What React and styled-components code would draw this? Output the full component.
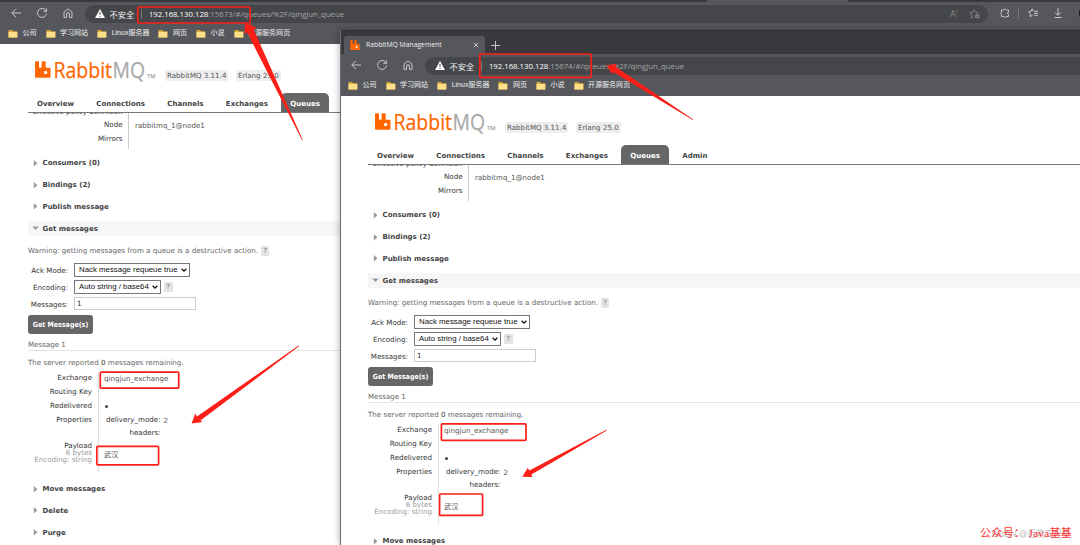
import React from 'react';
import styled, { createGlobalStyle } from 'styled-components';

const bookmarks = ['公司', '学习网站', 'Linux服务器', '网页', '小说', '开源服务网页'];
const tabs = ['Overview', 'Connections', 'Channels', 'Exchanges', 'Queues', 'Admin'];

const App = () => (
  <Desktop>
    <GlobalStyle />
    <BackWindow>
      <Browser port="15673" />
    </BackWindow>
    <FrontWindow>
      <Browser port="15674" />
    </FrontWindow>
    <Annotations />
    <CsdnMark>CSDN @巨萌工程师</CsdnMark>
    <AccountMark>公众号： Java基基</AccountMark>
  </Desktop>
)

export default App

const Browser = ({ port }) => (
  <BrowserFrame>
    <TabStrip>
      <BrowserTab>
        <RabbitIcon width="10" height="10" />
        <TabTitle>RabbitMQ Management</TabTitle>
        <Icon size="6" viewBox="0 0 6 6"><path d="M.8.8l4.4 4.4M5.2.8L.8 5.2" /></Icon>
      </BrowserTab>
      <Icon size="9" viewBox="0 0 9 9"><path d="M4.5 0v9M0 4.5h9" /></Icon>
    </TabStrip>
    <Toolbar>
      <NavIcons />
      <AddressBar>
        <svg width="10" height="9" viewBox="0 0 10 9">
          <path d="M5 0L10 9H0z" fill="#fff" />
          <path d="M5 3v3M5 7v1" stroke="#454649" />
        </svg>
        <Unsafe>不安全</Unsafe>
        <Divider />
        <Url><b>192.168.130.128</b>:{port}/#/queues/%2F/qingjun_queue</Url>
        <AddressActions>
          <ReadAloud>A<sup>))</sup></ReadAloud>
          <Icon size="11" viewBox="0 0 12 12">
            <path d="M5 10L2.6 11l.4-3L1 5.2l3-.5L5.6 2l1.6 2.7 3 .5" />
            <circle cx="9" cy="9" r="2.4" fill="#8b8c8f" stroke="none" />
            <path d="M9 7.8v2.4M7.8 9h2.4" stroke="#454649" strokeWidth=".7" />
          </Icon>
        </AddressActions>
      </AddressBar>
      <ToolbarActions>
        <Icon size="10" viewBox="0 0 10 10">
          <path d="M1.5 2h2a1.5 1.3 0 0 1 2.8 0h2.2v2.3a1 1 0 0 0 0 2v2.2H6.3a1.5 1.3 0 0 1-2.8 0h-2V6.4a1.2 1.2 0 0 1 0-2.2z" />
        </Icon>
        <Divider />
        <Icon size="10" viewBox="0 0 10 10">
          <path d="M5.3 3.2L4.1.9 3 3.4.6 3.8l1.8 1.9L2 8.5l2.6-1.3M6.2 3.3h3.6M6.2 5.3h3.6M6.2 7.3h3.6" />
        </Icon>
        <Icon size="10" viewBox="0 0 10 10"><path d="M5 0v7M2 4.3l3 3 3-3M1.5 9.5h7" /></Icon>
        <Avatar />
      </ToolbarActions>
    </Toolbar>
    <Bookmarks>
      {bookmarks.map(name => (
        <Bookmark key={name}>
          <svg width="10" height="9" viewBox="0 0 10 9">
            <path d="M.5 1h3.6l1 1.2h4.2v6.3H.5z" fill="#d9a93a" />
            <path d="M.5 3h8.8v5.5H.5z" fill="#ffe08a" />
          </svg>
          {name}
        </Bookmark>
      ))}
    </Bookmarks>
    <QueuePage />
  </BrowserFrame>
)

const NavIcons = () => (
  <Nav>
    <Icon size="10" viewBox="0 0 10 10"><path d="M10 5H.8M5 .8L.8 5 5 9.2" /></Icon>
    <Icon size="10" viewBox="0 0 10 10"><path d="M9.2 3.2A4.5 4.5 0 1 0 9.5 5.6M9.4.4v3H6.4" /></Icon>
    <Icon size="10" viewBox="0 0 10 10"><path d="M1 4.2L5 .8l4 3.4v5.2H6.4V6a1.4 1.4 0 0 0-2.8 0v3.4H1z" /></Icon>
  </Nav>
)

const RabbitIcon = (props) => (
  <svg viewBox="0 0 16 17" {...props}>
    <path d="M0 1Q0 0 1 0h2.2q1 0 1 1v5.3q0 .5.5.5h1.6q.5 0 .5-.5V1q0-1 1-1H10q1 0 1 1v5.3q0 .5.5.5H15q1 0 1 1V16q0 1-1 1H1q-1 0-1-1z" fill="#f60" />
    <rect x="9.4" y="10" width="3.2" height="3.2" rx=".8" fill="#fff" />
  </svg>
)

const QueuePage = () => (
  <Page>
    <Header>
      <RabbitIcon width="15.5" height="17" />
      <Wordmark viewBox="0 0 106 24">
        <text x="0.5" y="17.6" textLength="58.5" lengthAdjust="spacingAndGlyphs" fill="#f60" stroke="#f60">Rabbit</text>
        <text x="59.5" y="17.6" textLength="32.5" lengthAdjust="spacingAndGlyphs" fill="#aaa">MQ</text>
        <Trademark x="94" y="17.6" textLength="8.5" lengthAdjust="spacingAndGlyphs">TM</Trademark>
      </Wordmark>
      <Badge>RabbitMQ 3.11.4</Badge>
      <Badge>Erlang 25.0</Badge>
    </Header>
    <Menu>
      {tabs.map(tab => <MenuTab key={tab} selected={tab === 'Queues'}>{tab}</MenuTab>)}
    </Menu>
    <Scroll>
      <Facts>
        <Fact height={11}><Label>Effective policy definition</Label></Fact>
        <Fact height={14}><Label>Node</Label><Value>rabbitmq_1@node1</Value></Fact>
        <Fact height={14.5}><Label>Mirrors</Label></Fact>
        <Fact height={2.5}><Label /></Fact>
      </Facts>
      <Section title="Consumers (0)" />
      <Section title="Bindings (2)" />
      <Section title="Publish message" />
      <Section title="Get messages" open />
      <Warning>
        Warning: getting messages from a queue is a destructive action. <Help>?</Help>
      </Warning>
      <FormRow>
        <FormLabel>Ack Mode:</FormLabel>
        <Select width={116}>Nack message requeue true<Chevron /></Select>
      </FormRow>
      <FormRow>
        <FormLabel>Encoding:</FormLabel>
        <Select width={87}>Auto string / base64<Chevron /></Select>
        <Help>?</Help>
      </FormRow>
      <FormRow>
        <FormLabel>Messages:</FormLabel>
        <Input>1</Input>
      </FormRow>
      <Button>Get Message(s)</Button>
      <MessageTitle>Message 1</MessageTitle>
      <Remaining>The server reported <b>0</b> messages remaining.</Remaining>
      <Message />
      <Section title="Move messages" />
      <Section title="Delete" />
      <Section title="Purge" />
    </Scroll>
  </Page>
)

const Section = ({ title, open }) => (
  <SectionTitle open={open}>
    <svg width="7" height="7" viewBox="0 0 7 7">
      <path d={open ? 'M.2 1.5h6.6L3.5 5z' : 'M1.8 0v6.6L5.4 3.3z'} fill="#999" />
    </svg>
    {title}
  </SectionTitle>
)

const Chevron = () => (
  <Icon size="6" viewBox="0 0 6 6"><path d="M.6 1.8L3 4.2l2.4-2.4" stroke="#111" strokeWidth="1.3" /></Icon>
)

const Message = () => (
  <MessageTable>
    <MessageLabels>
      <Fact height={13}>Exchange</Fact>
      <Fact height={14.5}>Routing Key</Fact>
      <Fact height={13}>Redelivered</Fact>
      <Fact height={30}><Top>Properties</Top></Fact>
      <div>Payload<Sub>6 bytes</Sub><Sub>Encoding: string</Sub></div>
    </MessageLabels>
    <MessageValues>
      <Fact height={15}>qingjun_exchange</Fact>
      <Fact height={13} />
      <Fact height={13}><Dot /></Fact>
      <Fact height={15}><PropName>delivery_mode:</PropName><PropValue>2</PropValue></Fact>
      <Fact height={10.5}><PropName>headers:</PropName></Fact>
      <Payload>武汉</Payload>
    </MessageValues>
  </MessageTable>
)

// hand drawn style boxes and arrows lying over both windows
const Annotations = () => (
  <Overlay viewBox="0 0 1080 545">
    <g fill="none" stroke="#fb1f17" strokeWidth="1.7">
      <rect x="137.8" y="7" width="112.4" height="16" rx="1" />
      <rect x="479.8" y="54" width="111.4" height="23.3" rx="1" />
      <rect x="100.3" y="372.2" width="78.4" height="16" rx="1" />
      <rect x="96.8" y="446.4" width="61.8" height="18.4" rx="1" />
      <rect x="441.4" y="423.9" width="84.6" height="16.4" rx="1" />
      <rect x="439.6" y="494" width="43" height="21.4" rx="1" />
    </g>
    <g fill="#fb1f17">
      <path d="M245 22.5L256.5 27.7L253.8 29.8L302.8 140L302 140L247 32.2L244.4 34z" />
      <path d="M606.5 65.6L616.5 63.8L615.5 66.8L693.3 119.4L692.8 120L613.2 72L612.4 74.6z" />
      <path d="M191.6 423.5L195.2 413.8L197 416.4L298.5 345.6L299 346.3L200.4 420.5L202.5 422z" />
      <path d="M522.2 476.8L527.8 468L529.4 470.4L606.4 429.8L606.8 430.5L531.4 474.6L532.4 477z" />
    </g>
  </Overlay>
)

const GlobalStyle = createGlobalStyle`
  body {
    margin: 0;
    overflow: hidden;
  }
  * {
    box-sizing: border-box;
  }
`
const Desktop = styled.div`
  position: relative;
  width: 1080px;
  height: 545px;
  overflow: hidden;
  background: #fff;
  font: 7.1px/10px "DejaVu Sans", sans-serif;
  color: #555;
`
const BackWindow = styled.div`
  position: absolute;
  left: 0;
  top: -22px;
  width: 1080px;
  height: 567px;

  /* tab of this window sits further right */
  & > div > div:first-child {
    padding-left: 707px;
  }
`
const FrontWindow = styled.div`
  position: absolute;
  left: 340px;
  top: 30px;
  width: 1080px;
  height: 515px;
  overflow: hidden;
  box-shadow: 0 0 7px rgba(0, 0, 0, 0.35);
  border-left: 1px solid #6c6d70;
  & > div {
    margin-left: -1px;
  }
`
const BrowserFrame = styled.div`
  display: flex;
  flex-direction: column;
  height: 100%;
`
const TabStrip = styled.div`
  display: flex;
  align-items: center;
  flex: none;
  height: 24px;
  padding: 5px 0 0 4px;
  background: #38393c;
  border-top: 1px solid #303134;
`
const BrowserTab = styled.div`
  display: flex;
  align-items: center;
  width: 141px;
  height: 19px;
  padding: 0 6px;
  margin-right: 6px;
  border-radius: 3px 3px 0 0;
  background: #56575c;
  color: #eee;
`
const TabTitle = styled.span`
  flex: 1;
  margin-left: 6px;
  font: 6.8px/10px "Open Sans", sans-serif;
`
const Icon = styled.svg.attrs(props => ({ width: props.size, height: props.size }))`
  flex: none;
  fill: none;
  stroke: #d2d2d4;
  stroke-width: 0.9;
`
const Toolbar = styled.div`
  display: flex;
  align-items: center;
  flex: none;
  height: 22px;
  padding: 0 0 0 11px;
  background: #56575c;
`
const Nav = styled.div`
  display: flex;
  flex: none;
  gap: 16px;
  width: 74px;
`
const AddressBar = styled.div`
  display: flex;
  align-items: center;
  flex: none;
  width: 903px;
  height: 18px;
  margin-top: 1px;
  padding: 0 8px 0 10px;
  border-radius: 9px;
  background: #454649;
  svg {
    flex: none;
  }
`
const Unsafe = styled.span`
  margin: 0 6.5px 0 4.5px;
  color: #f2f2f2;
  font: 8.2px/12px "Noto Sans CJK SC", sans-serif;
`
const Divider = styled.span`
  width: 1px;
  height: 10px;
  background: #77787b;
`
const Url = styled.span`
  flex: 1;
  margin-left: 7.3px;
  color: #a4a5a8;
  font: 7.78px/12px "Open Sans", sans-serif;
  b {
    color: #fff;
    font-weight: 400;
  }
`
const AddressActions = styled.div`
  display: flex;
  align-items: center;
  gap: 11px;
  ${Icon} {
    stroke: #8b8c8f;
  }
`
const ReadAloud = styled.span`
  color: #8b8c8f;
  font: 8.5px/10px "Open Sans", sans-serif;
  sup {
    font-size: 4px;
    line-height: 0;
    vertical-align: 4px;
  }
`
const ToolbarActions = styled.div`
  display: flex;
  align-items: center;
  flex: none;
  margin-left: 11.5px;
  ${Divider} {
    margin: 0 9px 0 8px;
  }
  ${Icon} + ${Icon} {
    margin-left: 15px;
  }
`
const Avatar = styled.div`
  flex: none;
  width: 14px;
  height: 14px;
  margin-left: 16px;
  border-radius: 50%;
  background: #111;
`
const Bookmarks = styled.div`
  display: flex;
  align-items: center;
  flex: none;
  gap: 9px;
  height: 20px;
  padding: 0 0 2px 8px;
  background: #56575c;
`
const Bookmark = styled.div`
  display: flex;
  align-items: center;
  gap: 4.5px;
  color: #efefef;
  font: 7.03px/12px "Liberation Sans", "Noto Sans CJK SC", sans-serif;
`
const Page = styled.div`
  display: flex;
  flex-direction: column;
  flex: 1;
  min-height: 0;
  background: #fff;
`
const Header = styled.div`
  display: flex;
  align-items: flex-start;
  flex: none;
  height: 49px;
  padding: 17px 0 0 35px;
`
const Wordmark = styled.svg`
  width: 106px;
  height: 24px;
  margin: -1px 6.5px 0 2px;
  overflow: visible;
  font: 22.5px "Open Sans", sans-serif;
  stroke: #aaa;
  stroke-width: 0.25;
`
const Trademark = styled.text`
  fill: #aaa;
  font-size: 6px;
`
const Badge = styled.span`
  height: 11px;
  margin: 8.5px 7.5px 0 0;
  padding: 0 2px;
  border-radius: 2px;
  background: #eee;
  font-size: 7.1px;
  line-height: 11px;
`
const Menu = styled.div`
  display: flex;
  flex: none;
  height: 20px;
  margin-left: 28px;
  border-bottom: 1px solid #777;
`
const MenuTab = styled.div`
  height: 19px;
  padding: 0 9px;
  margin-right: 4.35px;
  border-radius: 5px 5px 0 0;
  background: ${props => props.selected ? '#666' : 'none'};
  color: ${props => props.selected ? '#fff' : '#444'};
  font-size: 7.02px;
  font-weight: 700;
  line-height: 21px;
`
const Scroll = styled.div`
  flex: 1;
  min-height: 0;
  padding-left: 28px;
  overflow: hidden;
`
const Facts = styled.div`
  margin: -6.4px 0 7.2px;
`
const Fact = styled.div`
  display: flex;
  align-items: center;
  height: ${props => props.height}px;
`
const Label = styled.div`
  align-self: stretch;
  display: flex;
  align-items: center;
  justify-content: flex-end;
  flex: none;
  width: 101px;
  padding-right: 5.5px;
  border-right: 1px solid #ccc;
  color: #333;
  white-space: nowrap;
`
const Value = styled.div`
  padding: 2px 0 0 6px;
`
const SectionTitle = styled.div`
  display: flex;
  align-items: center;
  gap: 4px;
  height: 15px;
  margin-bottom: ${props => props.open ? '7.6px' : '6.75px'};
  padding-left: 3.5px;
  background: ${props => props.open ? '#f6f6f6' : 'none'};
  color: #444;
  font-size: 7px;
  font-weight: 700;
`
const Warning = styled.div`
  display: flex;
  align-items: center;
  height: 14px;
  margin-bottom: 4px;
  color: #666;
`
const Help = styled.span`
  width: 8.5px;
  height: 10px;
  margin-left: 3px;
  background: #e4e4e4;
  color: #777;
  line-height: 10px;
  text-align: center;
`
const FormRow = styled.div`
  display: flex;
  align-items: center;
  height: 16.8px;
`
const FormLabel = styled.div`
  width: 46px;
  padding: 2.5px 6px 0 0;
  text-align: right;
  color: #333;
  white-space: nowrap;
`
const Select = styled.div`
  display: flex;
  align-items: center;
  justify-content: space-between;
  width: ${props => props.width}px;
  height: 14px;
  padding: 0 2px 0 4px;
  border: 1px solid #777;
  color: #111;
  font: 7.85px/12px "Liberation Sans", sans-serif;
`
const Input = styled.div`
  width: 122px;
  height: 13px;
  padding-left: 2px;
  border: 1px solid #ccc;
  color: #333;
  line-height: 11px;
`
const Button = styled.div`
  width: 65px;
  height: 19px;
  margin-top: 2.5px;
  border-radius: 3px;
  background: #666;
  color: #fff;
  font: 700 7.05px/19px "DejaVu Sans Condensed", "DejaVu Sans", sans-serif;
  font-stretch: condensed;
  text-align: center;
`
const MessageTitle = styled.div`
  height: 13px;
  margin-top: 4.5px;
  border-bottom: 1px solid #e4e4e4;
  color: #666;
  line-height: 13px;
`
const Remaining = styled.div`
  height: 20.5px;
  line-height: 23px;
  color: #666;
  b {
    color: #333;
    font-weight: 400;
  }
`
const MessageTable = styled.div`
  display: flex;
  height: 100px;
  margin-bottom: 10px;
`
const MessageLabels = styled.div`
  width: 71px;
  padding-right: 6px;
  border-right: 1.5px solid #ddd;
  color: #333;
  line-height: 7.3px;
  text-align: right;
  white-space: nowrap;
  ${Fact} {
    justify-content: flex-end;
  }
`
const Top = styled.span`
  align-self: flex-start;
  margin-top: 4px;
`
const Sub = styled.div`
  color: #999;
  line-height: 7px;
`
const MessageValues = styled.div`
  padding-left: 5px;
`
const Dot = styled.div`
  width: 3px;
  height: 3px;
  margin: 1px 0 0 1px;
  border-radius: 50%;
  background: #444;
`
const PropName = styled.div`
  width: 56.5px;
  text-align: right;
  color: #333;
`
const PropValue = styled.div`
  margin: 2px 0 0 3px;
`
const Payload = styled.div`
  padding-top: 9.5px;
  font: 7.2px/12px "Noto Sans CJK SC", sans-serif;
`
const Overlay = styled.svg`
  position: absolute;
  left: 0;
  top: 0;
  width: 1080px;
  height: 545px;
`
const CsdnMark = styled.div`
  position: absolute;
  left: 992px;
  top: 527px;
  color: #bbb;
  font: 8.6px/14px "Liberation Sans", "Noto Sans CJK SC", sans-serif;
  white-space: nowrap;
`
const AccountMark = styled.div`
  position: absolute;
  left: 980px;
  top: 526px;
  color: #f33;
  font: 11px/14px "Liberation Serif", "Noto Sans CJK SC", serif;
  letter-spacing: 0.35px;
  white-space: nowrap;
`
